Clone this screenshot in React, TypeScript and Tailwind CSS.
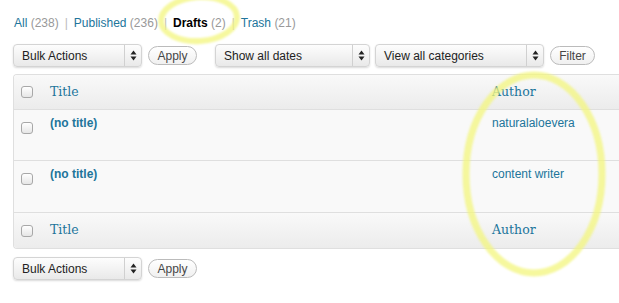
import React from "react";

const Arrows = () => (
  <svg width="7" height="11" viewBox="0 0 7 11">
    <path d="M3.5 0.5L6.5 4.5H0.5Z" fill="#222" />
    <path d="M3.5 10.5L6.5 6.5H0.5Z" fill="#222" />
  </svg>
);

const Select = ({ label, width }: { label: string; width: string }) => (
  <div
    className={`${width} flex h-[23px] items-stretch rounded-[4px] border border-[#d4d4d4] bg-gradient-to-b from-[#fdfdfd] to-[#e9e9e9] shadow-[0_1px_2px_rgba(0,0,0,0.15)]`}
  >
    <div className="flex flex-1 items-center pl-[8px] text-[12px] text-[#222]">{label}</div>
    <div className="flex w-[17px] items-center justify-center border-l border-[#d0d0d0]">
      <Arrows />
    </div>
  </div>
);

const Button = ({ label, width }: { label: string; width: string }) => (
  <div
    className={`${width} flex h-[19px] items-center justify-center rounded-full border border-[#bbbbbb] bg-gradient-to-b from-white to-[#f0f0f0] text-[12px] text-[#464646]`}
  >
    {label}
  </div>
);

const Check = () => (
  <div className="h-[12px] w-[12px] rounded-[3px] border border-[#a8a8a8] bg-gradient-to-b from-white to-[#e6e6e6]" />
);

const HeadRow = ({ border }: { border: string }) => (
  <div className={`flex h-[35px] items-center bg-gradient-to-b from-[#f9f9f9] to-[#ececec] ${border}`}>
    <div className="flex w-[36px] pl-[7px]">
      <Check />
    </div>
    <div className="w-[442px] font-['DejaVu_Serif',Georgia,serif] text-[12.5px] text-[#21759b]">Title</div>
    <div className="font-['DejaVu_Serif',Georgia,serif] text-[12.5px] text-[#21759b]">Author</div>
  </div>
);

const PostRow = ({ author, h }: { author: string; h: string }) => (
  <div className={`flex ${h} items-start border-b border-[#dfdfdf] bg-[#f9f9f9]`}>
    <div className="flex w-[36px] pl-[7px] pt-[12px]">
      <Check />
    </div>
    <div className="w-[442px] pt-[4px] text-[12px] font-bold text-[#21759b]">(no title)</div>
    <div className="pt-[4px] text-[12px] text-[#21759b]">{author}</div>
  </div>
);

export default function App() {
  return (
    <div className="relative h-[303px] w-[619px] overflow-hidden bg-white font-['Liberation_Sans',Arial,sans-serif]">
      <div className="flex h-[44px] items-center gap-[6px] pl-[14px] pt-[1px] text-[12px]">
        <span className="text-[#21759b]">
          All <span className="text-[#999]">(238)</span>
        </span>
        <span className="text-[#bbb]">|</span>
        <span className="text-[#21759b]">
          Published <span className="text-[#999]">(236)</span>
        </span>
        <span className="text-[#bbb]">|</span>
        <span className="font-bold text-black">
          Drafts <span className="font-normal text-[#999]">(2)</span>
        </span>
        <span className="text-[#bbb]">|</span>
        <span className="text-[#21759b]">
          Trash <span className="text-[#999]">(21)</span>
        </span>
      </div>

      <div className="flex items-center pl-[13px]">
        <Select label="Bulk Actions" width="w-[129px]" />
        <div className="ml-[6px]">
          <Button label="Apply" width="w-[49px]" />
        </div>
        <div className="ml-[18px]">
          <Select label="Show all dates" width="w-[155px]" />
        </div>
        <div className="ml-[5px]">
          <Select label="View all categories" width="w-[169px]" />
        </div>
        <div className="ml-[6px]">
          <Button label="Filter" width="w-[45px]" />
        </div>
      </div>

      <div className="ml-[13px] mt-[7px] w-[640px] overflow-hidden rounded-tl-[4px] rounded-bl-[4px] border border-r-0 border-[#dfdfdf]">
        <HeadRow border="border-b border-[#dfdfdf]" />
        <PostRow author="naturalaloevera" h="h-[51px]" />
        <PostRow author="content writer" h="h-[52px]" />
        <HeadRow border="" />
      </div>

      <div className="mt-[8px] flex items-center pl-[13px]">
        <Select label="Bulk Actions" width="w-[129px]" />
        <div className="ml-[6px]">
          <Button label="Apply" width="w-[49px]" />
        </div>
      </div>

      <svg className="pointer-events-none absolute left-0 top-0" width="619" height="303">
        <defs>
          <filter id="soft" x="-10%" y="-10%" width="120%" height="120%">
            <feGaussianBlur stdDeviation="0.8" />
          </filter>
        </defs>
        <g filter="url(#soft)" fill="none" stroke="#f3f57c" strokeOpacity="0.75">
          <ellipse cx="199" cy="19" rx="38" ry="22" strokeWidth="6" transform="rotate(-4 199 19)" />
          <ellipse cx="534" cy="174" rx="68" ry="99" strokeWidth="7" />
        </g>
      </svg>
    </div>
  );
}
